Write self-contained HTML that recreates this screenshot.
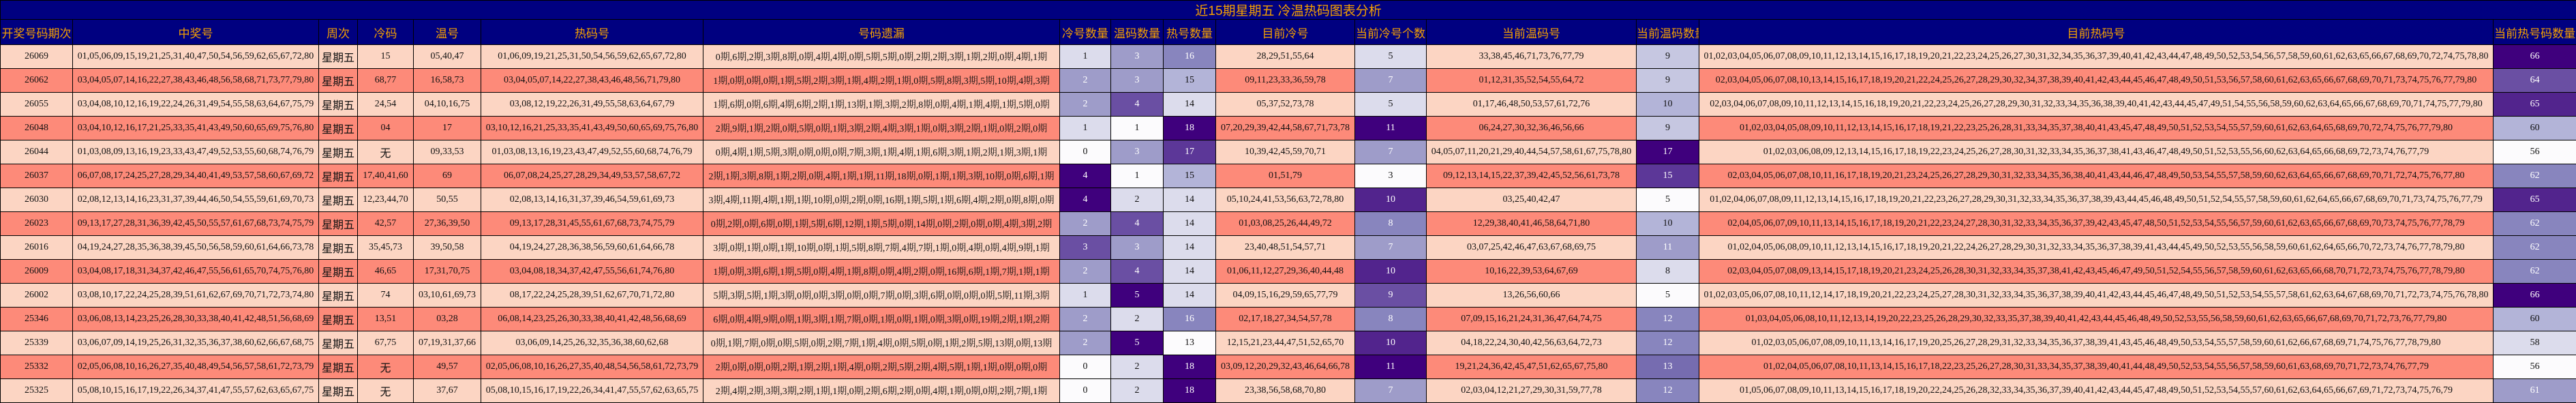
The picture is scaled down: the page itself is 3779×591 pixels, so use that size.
<!DOCTYPE html>
<html><head><meta charset="utf-8"><style>
html,body{margin:0;padding:0;background:#fff;width:3779px;height:591px;overflow:hidden}
table{border-collapse:collapse;table-layout:fixed;width:3779px;font-family:"Liberation Serif","Noto Serif CJK SC",serif;font-size:14px;color:#111}
td,th{border:1px solid #000;padding:0;text-align:center;white-space:nowrap;overflow:hidden}
.t th{background:#000080;color:#f5a000;font-family:"Liberation Sans","Noto Sans CJK SC",sans-serif;font-size:19px;font-weight:normal;height:26px}
.h th{background:#000080;color:#f5a000;font-family:"Liberation Sans","Noto Sans CJK SC",sans-serif;font-size:17px;font-weight:normal;height:36px}
tr.a td{background:#fcd5c3;height:34px}
tr.b td{background:#fd8a79;height:34px}
td.w{font-family:"Liberation Sans","Noto Sans CJK SC",sans-serif;font-size:16px}
tr td.c0{background:#fcfbfd}tr td.c1{background:#dcdcec}tr td.c2{background:#c6c7e1}tr td.c3{background:#b3b4d8}
tr td.c4{background:#9e9cc9;color:#fff}tr td.c5{background:#8885be;color:#fff}tr td.c6{background:#766cb0;color:#fff}
tr td.c7{background:#6a4fa3;color:#fff}tr td.c8{background:#5c3798;color:#fff}tr td.c9{background:#52248d;color:#fff}tr td.c10{background:#3f007d;color:#fff}
</style></head><body>
<table>
<colgroup><col style="width:106px"><col style="width:361px"><col style="width:57px"><col style="width:82px"><col style="width:99px"><col style="width:326px"><col style="width:523px"><col style="width:75px"><col style="width:77px"><col style="width:77px"><col style="width:204px"><col style="width:105px"><col style="width:308px"><col style="width:92px"><col style="width:1165px"><col style="width:122px"></colgroup>
<tr class="t"><th colspan="16">近15期星期五 冷温热码图表分析</th></tr>
<tr class="h"><th>开奖号码期次</th><th>中奖号</th><th>周次</th><th>冷码</th><th>温号</th><th>热码号</th><th>号码遗漏</th><th>冷号数量</th><th>温码数量</th><th>热号数量</th><th>目前冷号</th><th>当前冷号个数</th><th>当前温码号</th><th>当前温码数量</th><th>目前热码号</th><th>当前热号码数量</th></tr>
<tr class="a"><td>26069</td><td>01,05,06,09,15,19,21,25,31,40,47,50,54,56,59,62,65,67,72,80</td><td class="w">星期五</td><td>15</td><td>05,40,47</td><td>01,06,09,19,21,25,31,50,54,56,59,62,65,67,72,80</td><td>0期,6期,2期,3期,8期,0期,4期,4期,0期,5期,5期,0期,2期,2期,3期,1期,2期,0期,4期,1期</td><td class="c1">1</td><td class="c4">3</td><td class="c5">16</td><td>28,29,51,55,64</td><td class="c1">5</td><td>33,38,45,46,71,73,76,77,79</td><td class="c2">9</td><td>01,02,03,04,05,06,07,08,09,10,11,12,13,14,15,16,17,18,19,20,21,22,23,24,25,26,27,30,31,32,34,35,36,37,39,40,41,42,43,44,47,48,49,50,52,53,54,56,57,58,59,60,61,62,63,65,66,67,68,69,70,72,74,75,78,80</td><td class="c10">66</td></tr>
<tr class="b"><td>26062</td><td>03,04,05,07,14,16,22,27,38,43,46,48,56,58,68,71,73,77,79,80</td><td class="w">星期五</td><td>68,77</td><td>16,58,73</td><td>03,04,05,07,14,22,27,38,43,46,48,56,71,79,80</td><td>1期,0期,0期,0期,1期,5期,2期,3期,1期,4期,2期,1期,0期,5期,8期,3期,5期,10期,4期,3期</td><td class="c4">2</td><td class="c4">3</td><td class="c3">15</td><td>09,11,23,33,36,59,78</td><td class="c4">7</td><td>01,12,31,35,52,54,55,64,72</td><td class="c2">9</td><td>02,03,04,05,06,07,08,10,13,14,15,16,17,18,19,20,21,22,24,25,26,27,28,29,30,32,34,37,38,39,40,41,42,43,44,45,46,47,48,49,50,51,53,56,57,58,60,61,62,63,65,66,67,68,69,70,71,73,74,75,76,77,79,80</td><td class="c7">64</td></tr>
<tr class="a"><td>26055</td><td>03,04,08,10,12,16,19,22,24,26,31,49,54,55,58,63,64,67,75,79</td><td class="w">星期五</td><td>24,54</td><td>04,10,16,75</td><td>03,08,12,19,22,26,31,49,55,58,63,64,67,79</td><td>1期,6期,0期,6期,4期,6期,2期,1期,13期,1期,3期,2期,8期,0期,4期,1期,4期,1期,5期,0期</td><td class="c4">2</td><td class="c7">4</td><td class="c1">14</td><td>05,37,52,73,78</td><td class="c1">5</td><td>01,17,46,48,50,53,57,61,72,76</td><td class="c3">10</td><td>02,03,04,06,07,08,09,10,11,12,13,14,15,16,18,19,20,21,22,23,24,25,26,27,28,29,30,31,32,33,34,35,36,38,39,40,41,42,43,44,45,47,49,51,54,55,56,58,59,60,62,63,64,65,66,67,68,69,70,71,74,75,77,79,80</td><td class="c9">65</td></tr>
<tr class="b"><td>26048</td><td>03,04,10,12,16,17,21,25,33,35,41,43,49,50,60,65,69,75,76,80</td><td class="w">星期五</td><td>04</td><td>17</td><td>03,10,12,16,21,25,33,35,41,43,49,50,60,65,69,75,76,80</td><td>2期,9期,1期,2期,0期,5期,0期,1期,3期,2期,4期,3期,1期,0期,3期,2期,1期,0期,2期,0期</td><td class="c1">1</td><td class="c0">1</td><td class="c10">18</td><td>07,20,29,39,42,44,58,67,71,73,78</td><td class="c10">11</td><td>06,24,27,30,32,36,46,56,66</td><td class="c2">9</td><td>01,02,03,04,05,08,09,10,11,12,13,14,15,16,17,18,19,21,22,23,25,26,28,31,33,34,35,37,38,40,41,43,45,47,48,49,50,51,52,53,54,55,57,59,60,61,62,63,64,65,68,69,70,72,74,75,76,77,79,80</td><td class="c3">60</td></tr>
<tr class="a"><td>26044</td><td>01,03,08,09,13,16,19,23,33,43,47,49,52,53,55,60,68,74,76,79</td><td class="w">星期五</td><td class="w">无</td><td>09,33,53</td><td>01,03,08,13,16,19,23,43,47,49,52,55,60,68,74,76,79</td><td>0期,4期,1期,5期,3期,0期,0期,0期,7期,3期,1期,4期,1期,6期,3期,1期,2期,1期,3期,1期</td><td class="c0">0</td><td class="c4">3</td><td class="c8">17</td><td>10,39,42,45,59,70,71</td><td class="c4">7</td><td>04,05,07,11,20,21,29,40,44,54,57,58,61,67,75,78,80</td><td class="c10">17</td><td>01,02,03,06,08,09,12,13,14,15,16,17,18,19,22,23,24,25,26,27,28,30,31,32,33,34,35,36,37,38,41,43,46,47,48,49,50,51,52,53,55,56,60,62,63,64,65,66,68,69,72,73,74,76,77,79</td><td class="c0">56</td></tr>
<tr class="b"><td>26037</td><td>06,07,08,17,24,25,27,28,29,34,40,41,49,53,57,58,60,67,69,72</td><td class="w">星期五</td><td>17,40,41,60</td><td>69</td><td>06,07,08,24,25,27,28,29,34,49,53,57,58,67,72</td><td>2期,1期,3期,8期,1期,2期,0期,4期,1期,1期,11期,18期,0期,1期,1期,3期,10期,0期,6期,1期</td><td class="c10">4</td><td class="c0">1</td><td class="c3">15</td><td>01,51,79</td><td class="c0">3</td><td>09,12,13,14,15,22,37,39,42,45,52,56,61,73,78</td><td class="c8">15</td><td>02,03,04,05,06,07,08,10,11,16,17,18,19,20,21,23,24,25,26,27,28,29,30,31,32,33,34,35,36,38,40,41,43,44,46,47,48,49,50,53,54,55,57,58,59,60,62,63,64,65,66,67,68,69,70,71,72,74,75,76,77,80</td><td class="c5">62</td></tr>
<tr class="a"><td>26030</td><td>02,08,12,13,14,16,23,31,37,39,44,46,50,54,55,59,61,69,70,73</td><td class="w">星期五</td><td>12,23,44,70</td><td>50,55</td><td>02,08,13,14,16,31,37,39,46,54,59,61,69,73</td><td>3期,4期,11期,4期,1期,1期,10期,0期,2期,0期,16期,1期,5期,1期,6期,4期,2期,0期,8期,0期</td><td class="c10">4</td><td class="c1">2</td><td class="c1">14</td><td>05,10,24,41,53,56,63,72,78,80</td><td class="c9">10</td><td>03,25,40,42,47</td><td class="c0">5</td><td>01,02,04,06,07,08,09,11,12,13,14,15,16,17,18,19,20,21,22,23,26,27,28,29,30,31,32,33,34,35,36,37,38,39,43,44,45,46,48,49,50,51,52,54,55,57,58,59,60,61,62,64,65,66,67,68,69,70,71,73,74,75,76,77,79</td><td class="c9">65</td></tr>
<tr class="b"><td>26023</td><td>09,13,17,27,28,31,36,39,42,45,50,55,57,61,67,68,73,74,75,79</td><td class="w">星期五</td><td>42,57</td><td>27,36,39,50</td><td>09,13,17,28,31,45,55,61,67,68,73,74,75,79</td><td>0期,2期,0期,6期,0期,1期,5期,6期,12期,1期,5期,0期,14期,0期,2期,0期,0期,4期,3期,2期</td><td class="c4">2</td><td class="c7">4</td><td class="c1">14</td><td>01,03,08,25,26,44,49,72</td><td class="c5">8</td><td>12,29,38,40,41,46,58,64,71,80</td><td class="c3">10</td><td>02,04,05,06,07,09,10,11,13,14,15,16,17,18,19,20,21,22,23,24,27,28,30,31,32,33,34,35,36,37,39,42,43,45,47,48,50,51,52,53,54,55,56,57,59,60,61,62,63,65,66,67,68,69,70,73,74,75,76,77,78,79</td><td class="c5">62</td></tr>
<tr class="a"><td>26016</td><td>04,19,24,27,28,35,36,38,39,45,50,56,58,59,60,61,64,66,73,78</td><td class="w">星期五</td><td>35,45,73</td><td>39,50,58</td><td>04,19,24,27,28,36,38,56,59,60,61,64,66,78</td><td>3期,0期,1期,0期,1期,10期,0期,1期,5期,8期,7期,4期,7期,1期,0期,4期,0期,4期,9期,1期</td><td class="c7">3</td><td class="c4">3</td><td class="c1">14</td><td>23,40,48,51,54,57,71</td><td class="c4">7</td><td>03,07,25,42,46,47,63,67,68,69,75</td><td class="c4">11</td><td>01,02,04,05,06,08,09,10,11,12,13,14,15,16,17,18,19,20,21,22,24,26,27,28,29,30,31,32,33,34,35,36,37,38,39,41,43,44,45,49,50,52,53,55,56,58,59,60,61,62,64,65,66,70,72,73,74,76,77,78,79,80</td><td class="c5">62</td></tr>
<tr class="b"><td>26009</td><td>03,04,08,17,18,31,34,37,42,46,47,55,56,61,65,70,74,75,76,80</td><td class="w">星期五</td><td>46,65</td><td>17,31,70,75</td><td>03,04,08,18,34,37,42,47,55,56,61,74,76,80</td><td>1期,0期,3期,6期,1期,5期,0期,4期,1期,8期,0期,4期,2期,0期,16期,6期,1期,7期,1期,1期</td><td class="c4">2</td><td class="c7">4</td><td class="c1">14</td><td>01,06,11,12,27,29,36,40,44,48</td><td class="c9">10</td><td>10,16,22,39,53,64,67,69</td><td class="c1">8</td><td>02,03,04,05,07,08,09,13,14,15,17,18,19,20,21,23,24,25,26,28,30,31,32,33,34,35,37,38,41,42,43,45,46,47,49,50,51,52,54,55,56,57,58,59,60,61,62,63,65,66,68,70,71,72,73,74,75,76,77,78,79,80</td><td class="c5">62</td></tr>
<tr class="a"><td>26002</td><td>03,08,10,17,22,24,25,28,39,51,61,62,67,69,70,71,72,73,74,80</td><td class="w">星期五</td><td>74</td><td>03,10,61,69,73</td><td>08,17,22,24,25,28,39,51,62,67,70,71,72,80</td><td>5期,3期,5期,1期,3期,0期,0期,3期,0期,0期,7期,0期,3期,6期,0期,0期,0期,5期,11期,3期</td><td class="c1">1</td><td class="c10">5</td><td class="c1">14</td><td>04,09,15,16,29,59,65,77,79</td><td class="c7">9</td><td>13,26,56,60,66</td><td class="c0">5</td><td>01,02,03,05,06,07,08,10,11,12,14,17,18,19,20,21,22,23,24,25,27,28,30,31,32,33,34,35,36,37,38,39,40,41,42,43,44,45,46,47,48,49,50,51,52,53,54,55,57,58,61,62,63,64,67,68,69,70,71,72,73,74,75,76,78,80</td><td class="c10">66</td></tr>
<tr class="b"><td>25346</td><td>03,06,08,13,14,23,25,26,28,30,33,38,40,41,42,48,51,56,68,69</td><td class="w">星期五</td><td>13,51</td><td>03,28</td><td>06,08,14,23,25,26,30,33,38,40,41,42,48,56,68,69</td><td>6期,0期,4期,9期,0期,1期,3期,1期,7期,0期,1期,0期,1期,0期,3期,0期,19期,2期,1期,2期</td><td class="c4">2</td><td class="c1">2</td><td class="c5">16</td><td>02,17,18,27,34,54,57,78</td><td class="c5">8</td><td>07,09,15,16,21,24,31,36,47,64,74,75</td><td class="c5">12</td><td>01,03,04,05,06,08,10,11,12,13,14,19,20,22,23,25,26,28,29,30,32,33,35,37,38,39,40,41,42,43,44,45,46,48,49,50,52,53,55,56,58,59,60,61,62,63,65,66,67,68,69,70,71,72,73,76,77,79,80</td><td class="c3">60</td></tr>
<tr class="a"><td>25339</td><td>03,06,07,09,14,19,25,26,31,32,35,36,37,38,60,62,66,67,68,75</td><td class="w">星期五</td><td>67,75</td><td>07,19,31,37,66</td><td>03,06,09,14,25,26,32,35,36,38,60,62,68</td><td>0期,1期,7期,0期,0期,5期,0期,2期,7期,1期,4期,0期,5期,0期,1期,2期,5期,13期,0期,13期</td><td class="c4">2</td><td class="c10">5</td><td class="c0">13</td><td>12,15,21,23,44,47,51,52,65,70</td><td class="c9">10</td><td>04,18,22,24,30,40,42,56,63,64,72,73</td><td class="c5">12</td><td>01,02,03,05,06,07,08,09,10,11,13,14,16,17,19,20,25,26,27,28,29,31,32,33,34,35,36,37,38,39,41,43,45,46,48,49,50,53,54,55,57,58,59,60,61,62,66,67,68,69,71,74,75,76,77,78,79,80</td><td class="c1">58</td></tr>
<tr class="b"><td>25332</td><td>02,05,06,08,10,16,26,27,35,40,48,49,54,56,57,58,61,72,73,79</td><td class="w">星期五</td><td class="w">无</td><td>49,57</td><td>02,05,06,08,10,16,26,27,35,40,48,54,56,58,61,72,73,79</td><td>2期,0期,0期,0期,2期,1期,2期,1期,4期,0期,2期,5期,2期,4期,5期,1期,1期,0期,0期,0期</td><td class="c0">0</td><td class="c1">2</td><td class="c10">18</td><td>03,09,12,20,29,32,43,46,64,66,78</td><td class="c10">11</td><td>19,21,24,36,42,45,47,51,62,65,67,75,80</td><td class="c6">13</td><td>01,02,04,05,06,07,08,10,11,13,14,15,16,17,18,22,23,25,26,27,28,30,31,33,34,35,37,38,39,40,41,44,48,49,50,52,53,54,55,56,57,58,59,60,61,63,68,69,70,71,72,73,74,76,77,79</td><td class="c0">56</td></tr>
<tr class="a"><td>25325</td><td>05,08,10,15,16,17,19,22,26,34,37,41,47,55,57,62,63,65,67,75</td><td class="w">星期五</td><td class="w">无</td><td>37,67</td><td>05,08,10,15,16,17,19,22,26,34,41,47,55,57,62,63,65,75</td><td>2期,4期,2期,3期,3期,2期,1期,1期,0期,2期,6期,2期,0期,4期,1期,0期,0期,2期,7期,1期</td><td class="c0">0</td><td class="c1">2</td><td class="c10">18</td><td>23,38,56,58,68,70,80</td><td class="c4">7</td><td>02,03,04,12,21,27,29,30,31,59,77,78</td><td class="c5">12</td><td>01,05,06,07,08,09,10,11,13,14,15,16,17,18,19,20,22,24,25,26,28,32,33,34,35,36,37,39,40,41,42,43,44,45,47,48,49,50,51,52,53,54,55,57,60,61,62,63,64,65,66,67,69,71,72,73,74,75,76,79</td><td class="c4">61</td></tr>
</table>
</body></html>
